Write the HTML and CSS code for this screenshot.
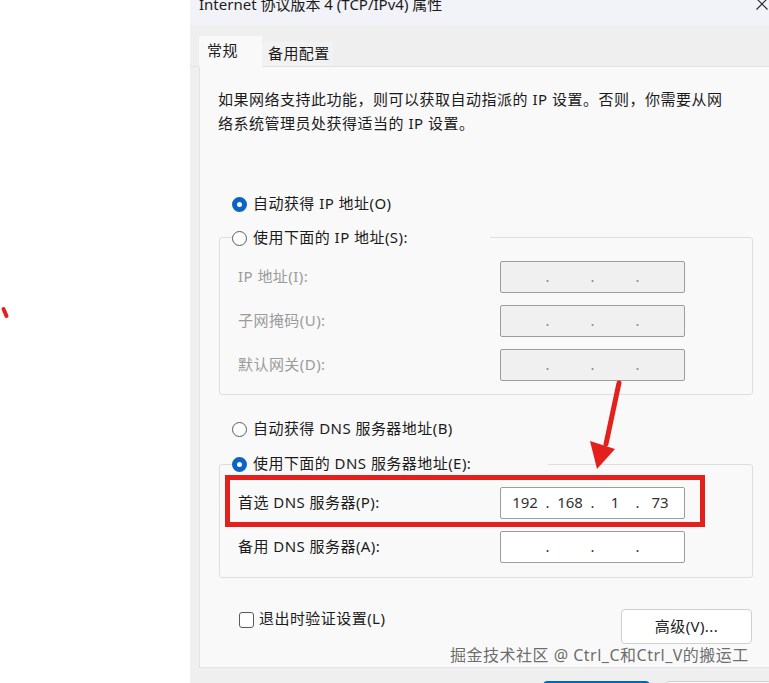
FILE: index.html
```html
<!DOCTYPE html>
<html lang="zh-CN">
<head>
    <meta charset="UTF-8">
    <meta name="viewport" content="width=device-width, initial-scale=1.0">
    <title>Internet 协议版本 4 (TCP/IPv4) 属性</title>
    <link rel="stylesheet" href="styles.css">
</head>
<body>
    <svg class="mark" width="12" height="20" viewBox="0 0 12 20">
        <line x1="3.5" y1="6" x2="6.5" y2="13" stroke="#e3201b" stroke-width="4" stroke-linecap="round"/>
    </svg>

    <div class="window">
        <div class="titlebar">
            <span class="title">Internet 协议版本 4 (TCP/IPv4) 属性</span>
            <svg class="close" width="12" height="12" viewBox="0 0 12 12">
                <path d="M0.5 0.5 L11.5 11.5 M11.5 0.5 L0.5 11.5" stroke="#222" stroke-width="1.1" fill="none"/>
            </svg>
        </div>

        <div class="tabs">
            <div class="tab active">常规</div>
            <div class="tab">备用配置</div>
        </div>

        <div class="panel">
            <p class="intro">如果网络支持此功能，则可以获取自动指派的 IP 设置。否则，你需要从网<br>络系统管理员处获得适当的 IP 设置。</p>

            <div class="radio-row first"><span class="radio on"></span>自动获得 IP 地址(O)</div>

            <div class="group ip-group">
                <div class="group-head ip-head">
                    <div class="radio-row"><span class="radio"></span>使用下面的 IP 地址(S):</div>
                </div>
                <div class="field">
                    <span class="field-label disabled">IP 地址(I):</span>
                    <div class="ip-box off"><span class="seg"></span><span class="dot">.</span><span class="seg"></span><span class="dot">.</span><span class="seg"></span><span class="dot">.</span><span class="seg"></span></div>
                </div>
                <div class="field">
                    <span class="field-label disabled">子网掩码(U):</span>
                    <div class="ip-box off"><span class="seg"></span><span class="dot">.</span><span class="seg"></span><span class="dot">.</span><span class="seg"></span><span class="dot">.</span><span class="seg"></span></div>
                </div>
                <div class="field">
                    <span class="field-label disabled">默认网关(D):</span>
                    <div class="ip-box off"><span class="seg"></span><span class="dot">.</span><span class="seg"></span><span class="dot">.</span><span class="seg"></span><span class="dot">.</span><span class="seg"></span></div>
                </div>
            </div>

            <div class="radio-row dns-auto"><span class="radio"></span>自动获得 DNS 服务器地址(B)</div>

            <div class="group dns-group">
                <div class="group-head dns-head">
                    <div class="radio-row"><span class="radio on"></span>使用下面的 DNS 服务器地址(E):</div>
                </div>
                <div class="field">
                    <span class="field-label">首选 DNS 服务器(P):</span>
                    <div class="ip-box"><span class="seg">192</span><span class="dot">.</span><span class="seg">168</span><span class="dot">.</span><span class="seg">1</span><span class="dot">.</span><span class="seg">73</span></div>
                </div>
                <div class="field">
                    <span class="field-label">备用 DNS 服务器(A):</span>
                    <div class="ip-box"><span class="seg"></span><span class="dot">.</span><span class="seg"></span><span class="dot">.</span><span class="seg"></span><span class="dot">.</span><span class="seg"></span></div>
                </div>
            </div>

            <div class="actions">
                <label class="check-row"><span class="checkbox"></span>退出时验证设置(L)</label>
                <button class="btn">高级(V)...</button>
            </div>
        </div>

        <!-- 确定 / 取消 按钮只露出顶边 -->
        <div class="footer">
            <span class="btn-foot ok" aria-label="确定"></span>
            <span class="btn-foot" aria-label="取消"></span>
        </div>
    </div>

    <!-- 标注 -->
    <div class="highlight"></div>
    <svg class="arrow" width="45" height="95" viewBox="0 0 45 95">
        <line x1="39" y1="5" x2="26" y2="66" stroke="#e3201b" stroke-width="5" stroke-linecap="round"/>
        <polygon points="10,63 35,71 17,91" fill="#e3201b"/>
    </svg>

    <div class="watermark">掘金技术社区 @ Ctrl_C和Ctrl_V的搬运工</div>
</body>
</html>
```

FILE: styles.css
```css
html, body {
    margin: 0;
    padding: 0;
    overflow: hidden;
}
body {
    position: relative;
    height: 683px;
    background: #fff;
    font-family: "Noto Sans", "Noto Sans CJK SC", sans-serif;
    font-size: 15px;
    color: #1b1b1b;
}
.mark {
    position: absolute;
    left: 0;
    top: 303px;
}
.window {
    width: 590px;
    margin: -12px 0 0 190px;
    background: #efefef;
}
.titlebar {
    height: 37px;
    box-sizing: border-box;
    background: #f2f3f8;
    display: flex;
    align-items: center;
    justify-content: space-between;
    padding: 0 12px 0 9px;
    line-height: 20px;
}
.title {
    margin-top: -6px;
}
.close {
    margin-top: -6px;
}
.tabs {
    height: 42px;
    display: flex;
    align-items: flex-end;
    padding-left: 9px;
    border-bottom: 1px solid #e3e3e3;
    box-sizing: border-box;
}
.tab {
    width: 71px;
    height: 24px;
    line-height: 22px;
    padding-left: 6px;
    box-sizing: border-box;
    background: #f2f2f2;
    color: #1b1b1b;
    letter-spacing: 0.4px;
}
.tab.active {
    width: 63px;
    height: 31px;
    line-height: 28px;
    padding-left: 8px;
    background: #f9f9f9;
    margin-bottom: -1px;
}
.panel {
    margin-left: 9px;
    height: 601px;
    box-sizing: border-box;
    background: #f9f9f9;
    border: 1px solid #e3e3e3;
    border-top: none;
    padding: 20px 0 0 19px;
    letter-spacing: 0.45px;
}
.intro {
    margin: 0 0 0 -1px;
    line-height: 24px;
    letter-spacing: 0.5px;
}
.radio-row {
    display: flex;
    align-items: center;
    height: 24px;
    white-space: nowrap;
    line-height: 20px;
}
.radio-row.first {
    margin: 56px 0 0 13px;
}
.radio {
    width: 15px;
    height: 15px;
    box-sizing: border-box;
    border-radius: 50%;
    border: 1px solid #5c5c5c;
    background: #fdfdfd;
    margin: 2px 6px 0 0;
    flex: none;
}
.radio.on {
    border: 5px solid #0b63c4;
    background: #fff;
}
.group {
    width: 534px;
    box-sizing: border-box;
    border: 1px solid #dedede;
    border-radius: 3px;
    padding: 0 0 13px 12px;
}
.ip-group {
    margin-top: 22px;
}
.group-head {
    background: #f9f9f9;
    margin-top: -13px;
}
.ip-head {
    width: 258px;
}
.dns-head {
    width: 316px;
    margin-top: -14px;
}
.field {
    display: flex;
    align-items: center;
    height: 32px;
    margin-top: 12px;
}
.field + .field {
    margin-top: 12px;
}
.dns-group .field:first-of-type {
    margin-top: 11px;
}
.dns-group {
    margin-top: 24px;
    padding-bottom: 14px;
}
.field-label {
    width: 268px;
    padding: 0 0 3px 6px;
    box-sizing: border-box;
}
.disabled {
    color: #9b9b9b;
}
.ip-box {
    width: 185px;
    height: 32px;
    box-sizing: border-box;
    border: 1px solid #9d9d9d;
    border-radius: 2px;
    background: #fff;
    display: flex;
    align-items: center;
    justify-content: center;
    color: #333;
    letter-spacing: 0;
    padding-bottom: 2px;
}
.ip-box.off {
    background: #f0f0f0;
    color: #8a8a8a;
}
.seg {
    width: 39px;
    text-align: center;
}
.dot {
    width: 6px;
    text-align: center;
}
.radio-row.dns-auto {
    margin: 21px 0 0 13px;
}
.actions {
    width: 533px;
    display: flex;
    justify-content: space-between;
    align-items: flex-start;
    margin-top: 31px;
}
.check-row {
    display: flex;
    align-items: center;
    height: 24px;
    line-height: 20px;
    margin-top: -3px;
    padding-left: 20px;
}
.checkbox {
    width: 15px;
    height: 16px;
    box-sizing: border-box;
    border: 1px solid #5c5c5c;
    border-radius: 3px;
    background: #fff;
    margin: 3px 5px 0 0;
}
.btn {
    width: 131px;
    height: 35px;
    background: #fff;
    border: 1px solid #cfcfcf;
    border-radius: 4px;
    font-family: inherit;
    font-size: 15px;
    color: #1b1b1b;
    padding: 0 0 3px;
    letter-spacing: 0.4px;
}
.footer {
    display: flex;
    gap: 15px;
    padding: 13px 0 0 353px;
    height: 60px;
    box-sizing: border-box;
}
.btn-foot {
    display: block;
    width: 107px;
    height: 32px;
    box-sizing: border-box;
    border: 1px solid #d0d0d0;
    border-radius: 4px;
    background: #fbfbfb;
}
.btn-foot.ok {
    background: #0067c0;
    border-color: #0067c0;
}
.highlight {
    position: absolute;
    left: 225px;
    top: 475px;
    width: 480px;
    height: 52px;
    box-sizing: border-box;
    border: 5px solid #e3201b;
}
.arrow {
    position: absolute;
    left: 580px;
    top: 378px;
}
.watermark {
    position: absolute;
    left: 450px;
    top: 644px;
    font-size: 16px;
    line-height: 22px;
    letter-spacing: 0.5px;
    color: rgba(70, 70, 70, 0.8);
    white-space: nowrap;
}
```
